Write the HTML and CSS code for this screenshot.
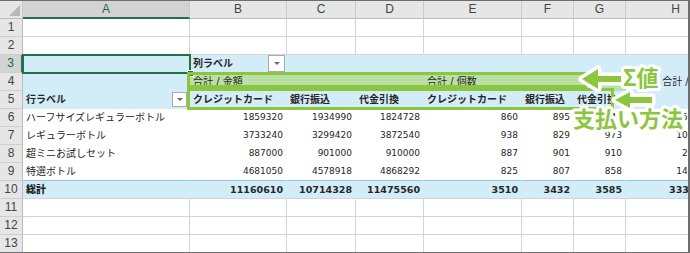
FILE: index.html
```html
<!DOCTYPE html>
<html lang="ja">

<head>
    <meta charset="UTF-8">
    <title>ピボットテーブル</title>
    <link rel="stylesheet" href="styles.css">
</head>

<body>
    <div class="sheet">
        <div class="row head">
            <div class="corner"><span class="tri"></span></div>
            <div class="ch sel">A</div>
            <div class="ch">B</div>
            <div class="ch">C</div>
            <div class="ch">D</div>
            <div class="ch">E</div>
            <div class="ch">F</div>
            <div class="ch">G</div>
            <div class="ch">H</div>
        </div>

        <div class="row">
            <div class="rh">1</div>
            <div class="c"></div><div class="c"></div><div class="c"></div><div class="c"></div>
            <div class="c"></div><div class="c"></div><div class="c"></div><div class="c"></div>
        </div>
        <div class="row">
            <div class="rh">2</div>
            <div class="c"></div><div class="c"></div><div class="c"></div><div class="c"></div>
            <div class="c"></div><div class="c"></div><div class="c"></div><div class="c"></div>
        </div>

        <!-- pivot table -->
        <div class="row pv blue">
            <div class="rh sel">3</div>
            <div class="c"></div>
            <div class="c has-dd"><b>列ラベル</b><span class="dd big"></span></div>
            <div class="c"></div><div class="c"></div><div class="c"></div>
            <div class="c"></div><div class="c"></div><div class="c"></div>
        </div>
        <div class="row pv blue">
            <div class="rh">4</div>
            <div class="c"></div>
            <div class="c green">合計 / 金額</div>
            <div class="c green"></div>
            <div class="c green"></div>
            <div class="c green">合計 / 個数</div>
            <div class="c green"></div>
            <div class="c green"></div>
            <div class="c">全体の 合計 / 金額</div>
        </div>
        <div class="row pv blue">
            <div class="rh">5</div>
            <div class="c has-dd a5"><b>行ラベル</b><span class="dd"></span></div>
            <div class="c"><b>クレジットカード</b></div>
            <div class="c"><b>銀行振込</b></div>
            <div class="c"><b>代金引換</b></div>
            <div class="c"><b>クレジットカード</b></div>
            <div class="c"><b>銀行振込</b></div>
            <div class="c"><b>代金引換</b></div>
            <div class="c"></div>
        </div>
        <div class="row pv">
            <div class="rh">6</div>
            <div class="c">ハーフサイズレギュラーボトル</div>
            <div class="c num">1859320</div>
            <div class="c num">1934990</div>
            <div class="c num">1824728</div>
            <div class="c num">860</div>
            <div class="c num">895</div>
            <div class="c num">844</div>
            <div class="c num">5619038</div>
        </div>
        <div class="row pv">
            <div class="rh">7</div>
            <div class="c">レギュラーボトル</div>
            <div class="c num">3733240</div>
            <div class="c num">3299420</div>
            <div class="c num">3872540</div>
            <div class="c num">938</div>
            <div class="c num">829</div>
            <div class="c num">973</div>
            <div class="c num">10905200</div>
        </div>
        <div class="row pv">
            <div class="rh">8</div>
            <div class="c">超ミニお試しセット</div>
            <div class="c num">887000</div>
            <div class="c num">901000</div>
            <div class="c num">910000</div>
            <div class="c num">887</div>
            <div class="c num">901</div>
            <div class="c num">910</div>
            <div class="c num">2698000</div>
        </div>
        <div class="row pv last">
            <div class="rh">9</div>
            <div class="c">特選ボトル</div>
            <div class="c num">4681050</div>
            <div class="c num">4578918</div>
            <div class="c num">4868292</div>
            <div class="c num">825</div>
            <div class="c num">807</div>
            <div class="c num">858</div>
            <div class="c num">14128260</div>
        </div>
        <div class="row pv blue total">
            <div class="rh">10</div>
            <div class="c"><b>総計</b></div>
            <div class="c num">11160610</div>
            <div class="c num">10714328</div>
            <div class="c num">11475560</div>
            <div class="c num">3510</div>
            <div class="c num">3432</div>
            <div class="c num">3585</div>
            <div class="c num">33350498</div>
        </div>

        <div class="row">
            <div class="rh">11</div>
            <div class="c"></div><div class="c"></div><div class="c"></div><div class="c"></div>
            <div class="c"></div><div class="c"></div><div class="c"></div><div class="c"></div>
        </div>
        <div class="row">
            <div class="rh">12</div>
            <div class="c"></div><div class="c"></div><div class="c"></div><div class="c"></div>
            <div class="c"></div><div class="c"></div><div class="c"></div><div class="c"></div>
        </div>
        <div class="row">
            <div class="rh">13</div>
            <div class="c"></div><div class="c"></div><div class="c"></div><div class="c"></div>
            <div class="c"></div><div class="c"></div><div class="c"></div><div class="c"></div>
        </div>

        <!-- overlays -->
        <div class="cursor"><span class="handle"></span></div>
        <div class="box box-values"></div>
        <div class="box box-methods"></div>

        <svg class="note" width="140" height="90" viewBox="0 0 140 90">
            <path d="M22 24 L38 14 L38 21 L61 21 L61 27 L38 27 L38 34 Z" />
            <path d="M55 45 L70 37 L70 42 L92 42 L92 48 L70 48 L70 53 Z" />
            <text x="63" y="31">Σ値</text>
            <text x="13" y="72">支払い方法</text>
        </svg>
    </div>
</body>

</html>
```

FILE: styles.css
```css
body {
    margin: 0;
    background: #fff;
}

.sheet {
    position: relative;
    width: 690px;
    height: 253px;
    box-sizing: border-box;
    overflow: hidden;
    border-top: 1px solid #6e6e6e;
    border-right: 2px solid #6e6e6e;
    border-bottom: 1px solid #6e6e6e;
    font-family: "DejaVu Sans", "Noto Sans CJK JP", sans-serif;
    font-size: 10px;
    color: #262626;
}

.row {
    display: grid;
    grid-template-columns: 23px 167px 97px 69px 68px 98px 52px 52px 100px;
    height: 18px;
}

.row > div {
    box-sizing: border-box;
    height: 18px;
    line-height: 17px;
    white-space: nowrap;
}

/* headers */
.head .ch,
.head .corner {
    background: #e6e6e6;
    border-right: 1px solid #cacaca;
    border-bottom: 1px solid #bcbcbc;
    text-align: center;
    font-family: "Liberation Sans", sans-serif;
    font-size: 12px;
    color: #444;
}

.head .ch.sel {
    background: #d3d3d3;
    border-bottom: 2px solid #217346;
    color: #1d6b40;
}

.corner {
    display: flex;
    justify-content: flex-end;
    align-items: flex-end;
    padding: 0 2px 2px 0;
}

.tri {
    width: 0;
    height: 0;
    border-left: 11px solid transparent;
    border-bottom: 11px solid #b8b8b8;
}

.rh {
    background: #e6e6e6;
    border-right: 1px solid #bcbcbc;
    border-bottom: 1px solid #cfcfcf;
    text-align: center;
    font-family: "Liberation Sans", sans-serif;
    font-size: 12px;
    color: #444;
}

.rh.sel {
    background: #d3d3d3;
    border-right: 2px solid #217346;
    color: #1d6b40;
}

/* cells */
.c {
    border-right: 1px solid #d4d4d4;
    border-bottom: 1px solid #d4d4d4;
    padding: 0 3px;
    overflow: hidden;
}

.num {
    text-align: right;
    font-size: 9px;
}

.pv .c {
    border-color: transparent;
}

.blue .c {
    background: #d2ecf8;
}

.blue .c.green {
    background: #b9e0a5;
}

.last .c {
    border-bottom-color: #8fc6e6;
}

.total .c {
    font-weight: bold;
    border-bottom-color: #d4d4d4;
}

.total .num {
    font-size: 9.5px;
}

.has-dd {
    display: flex;
    align-items: center;
    justify-content: space-between;
    padding-right: 1px;
}

.has-dd.a5 {
    padding-right: 2px;
}

.dd {
    box-sizing: border-box;
    width: 15px;
    height: 15px;
    border: 1px solid #a9a9a9;
    background: #fff;
    display: flex;
    align-items: center;
    justify-content: center;
}

.dd.big {
    width: 17px;
    height: 17px;
}

.dd::after {
    content: "";
    border-left: 3px solid transparent;
    border-right: 3px solid transparent;
    border-top: 3px solid #6a6a6a;
}

/* selection + highlight boxes */
.cursor {
    position: absolute;
    left: 22px;
    top: 53px;
    width: 169px;
    height: 20px;
    box-sizing: border-box;
    border: 2px solid #217346;
}

.handle {
    position: absolute;
    right: -5px;
    bottom: -5px;
    width: 5px;
    height: 5px;
    background: #217346;
    border: 1px solid #fff;
}

.box {
    position: absolute;
    left: 187px;
    box-sizing: border-box;
    border: 3px solid #8cc63f;
}

.box-values {
    top: 71px;
    width: 400px;
    height: 16px;
}

.box-methods {
    top: 87px;
    width: 427px;
    height: 22px;
}

.note {
    position: absolute;
    left: 560px;
    top: 54px;
    overflow: visible;
}

.note path {
    fill: #8cc63f;
    stroke: #fff;
    stroke-width: 7;
    stroke-linejoin: round;
    paint-order: stroke;
}

.note text {
    font-family: "Noto Sans CJK JP", sans-serif;
    font-weight: bold;
    font-size: 22px;
    fill: #8cc63f;
    stroke: #fff;
    stroke-width: 6;
    stroke-linejoin: round;
    paint-order: stroke;
}
```
